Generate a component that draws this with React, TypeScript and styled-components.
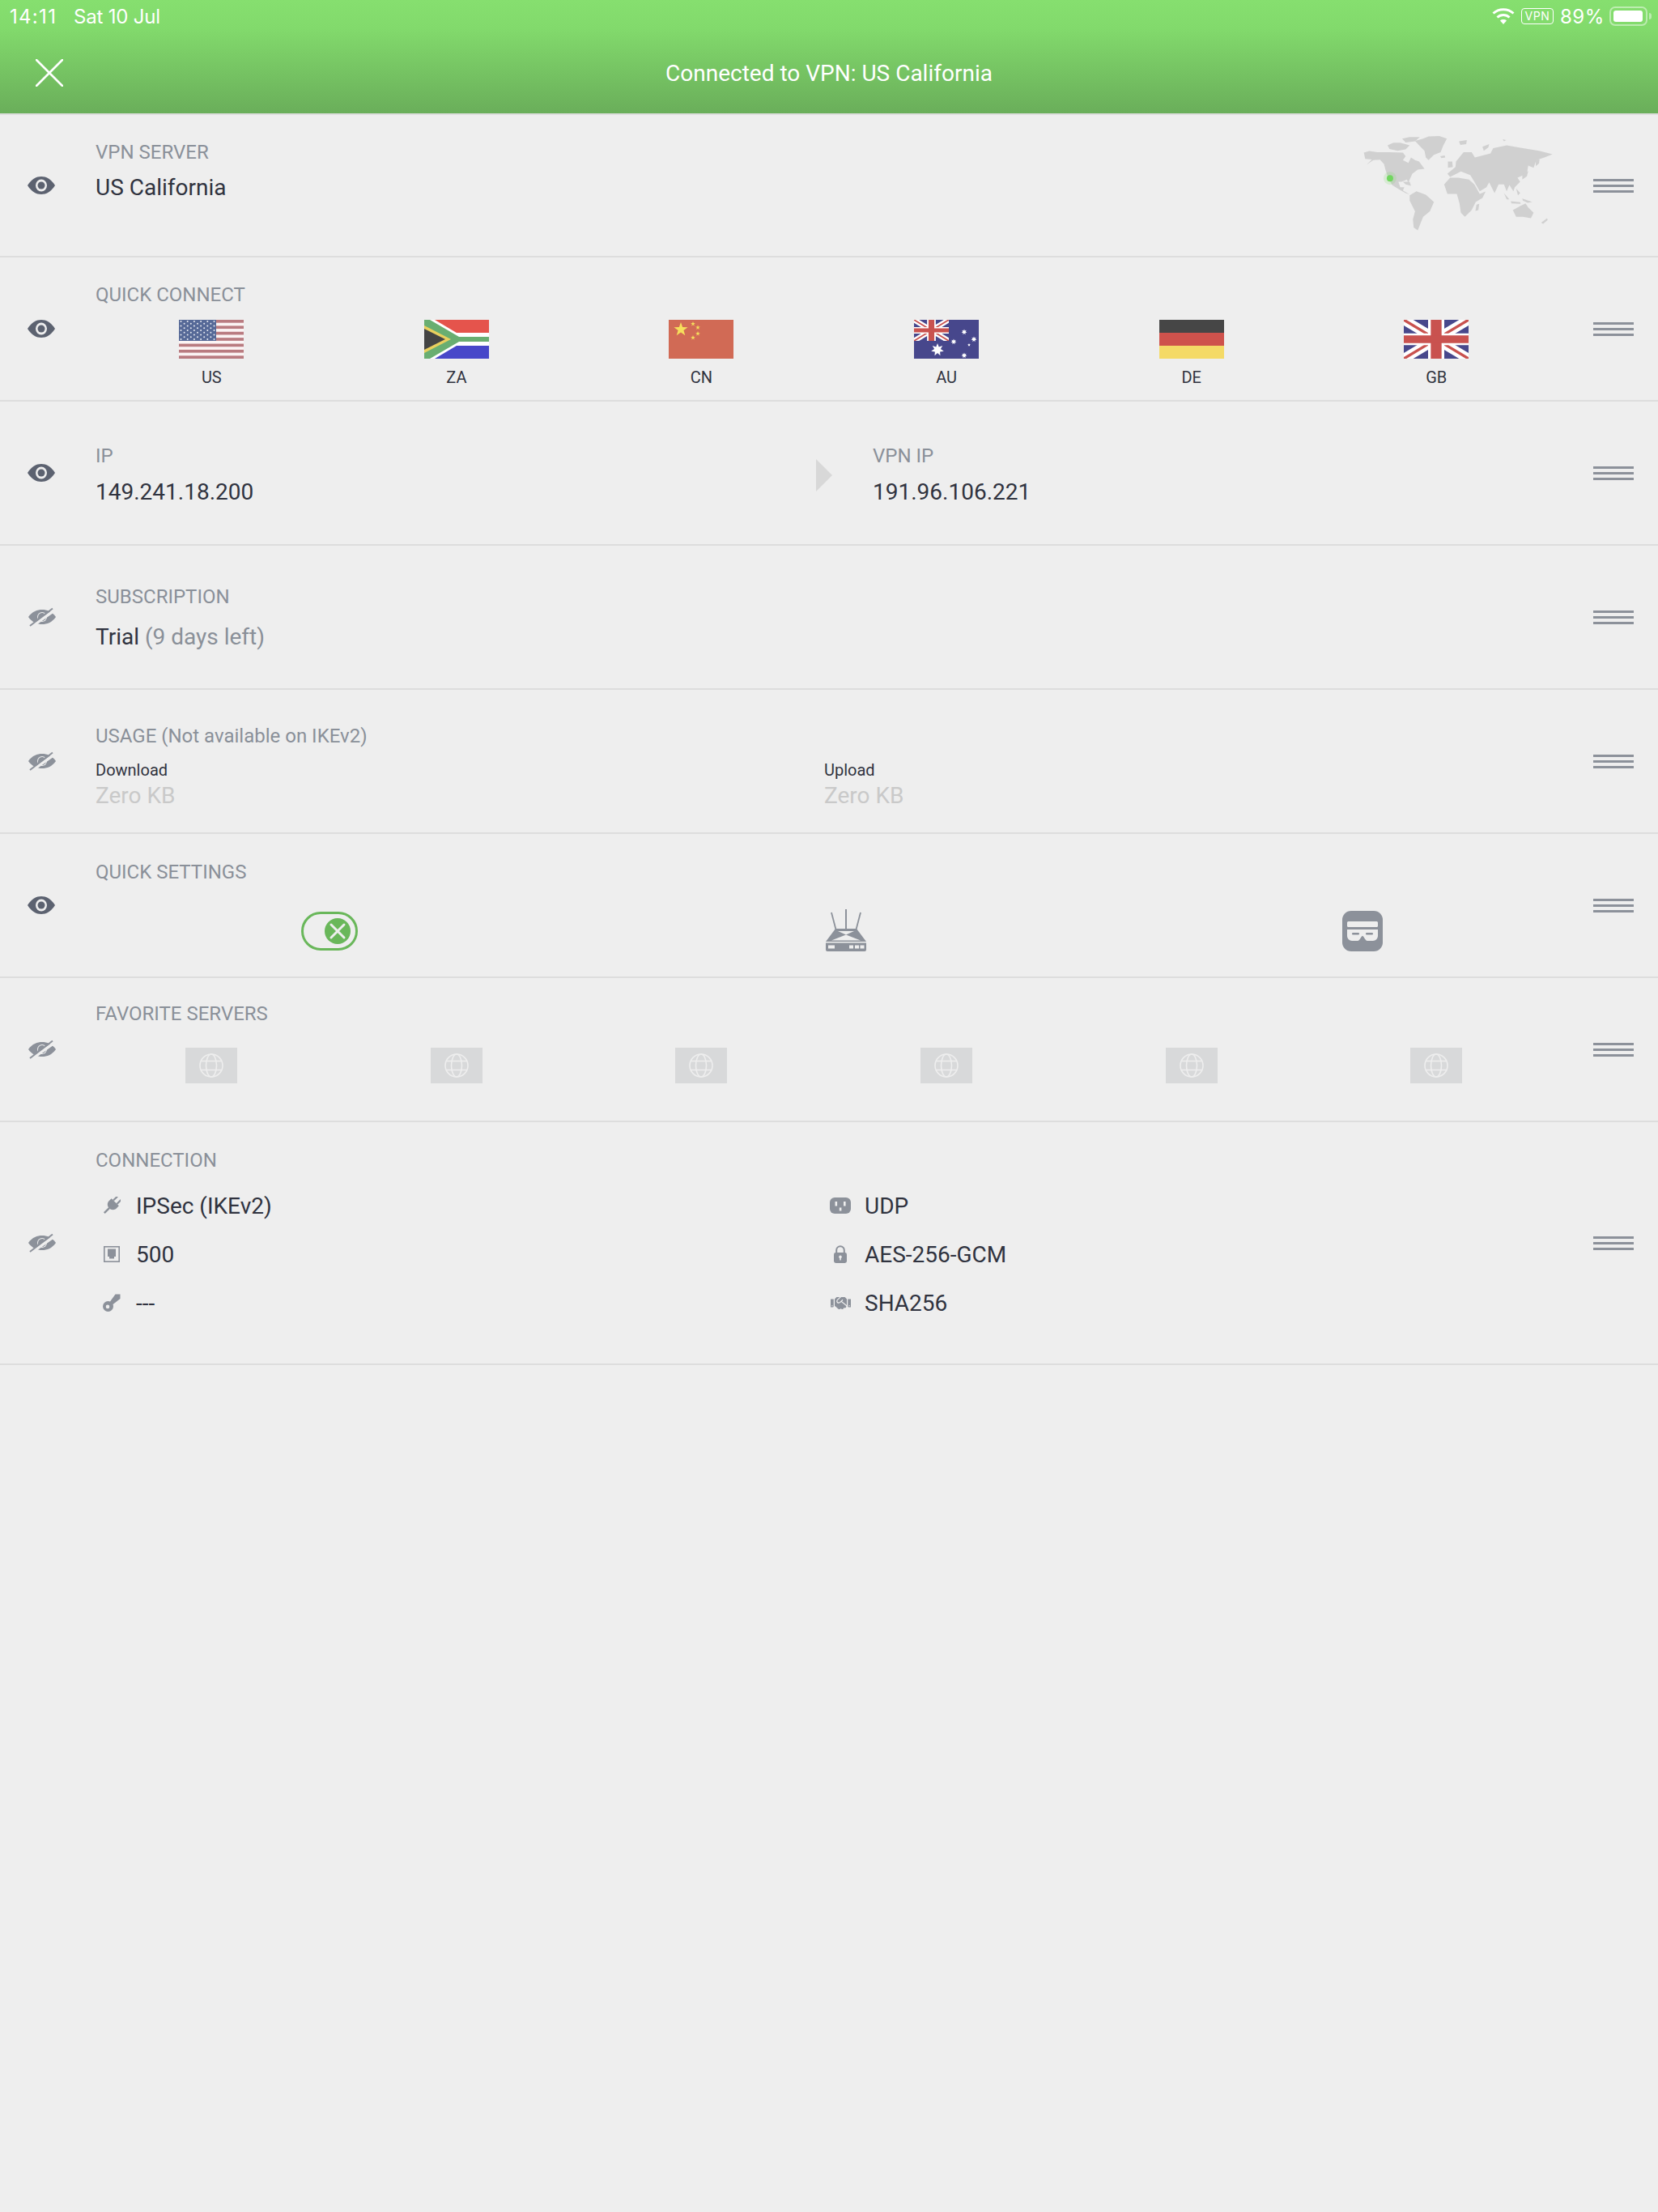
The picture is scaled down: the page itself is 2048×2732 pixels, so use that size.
import React from "react";
import styled, { createGlobalStyle } from "styled-components";
import { FaHandshake } from "react-icons/fa";

const GlobalStyle = createGlobalStyle`
  html, body {
    margin: 0;
    background: #eeeeee;
  }
  body {
    min-height: 2732px;
    font-family: Roboto, "Liberation Sans", sans-serif;
    color: #30333f;
  }
`;

const GRAY = "#8c919a";
const DARK_EYE = "#5c6270";

function EyeIcon({ off }: { off?: boolean }) {
  if (off) {
    return (
      <svg width="36" height="24" viewBox="0 0 36 24">
        <path d="M1 12 C6 5 12 3 18 3 C24 3 30 5 35 12 C30 19 24 21 18 21 C12 21 6 19 1 12 Z" fill={GRAY} />
        <circle cx="18" cy="12" r="6" fill="#eeeeee" />
        <path d="M13 12 a5 5 0 0 1 8 -4 L14 17 a5 5 0 0 1 -1 -5 Z" fill={GRAY} />
        <path d="M23 12 a5 5 0 0 1 -8 4 L22 7 a5 5 0 0 1 1 5 Z" fill={GRAY} />
        <path d="M5 24 L33 4" stroke="#eeeeee" strokeWidth="3.5" />
        <path d="M3 23 L31 1.5" stroke={GRAY} strokeWidth="2" />
      </svg>
    );
  }
  return (
    <svg width="34" height="22" viewBox="0 0 34 22">
      <path d="M0 11 C5 3 11 0 17 0 C23 0 29 3 34 11 C29 19 23 22 17 22 C11 22 5 19 0 11 Z" fill={DARK_EYE} />
      <ellipse cx="17" cy="11" rx="7" ry="7.5" fill="#eeeeee" />
      <circle cx="17" cy="11" r="4.5" fill={DARK_EYE} />
    </svg>
  );
}

function CloseIcon() {
  return (
    <svg width="34" height="34" viewBox="0 0 34 34">
      <path d="M1 1 L33 33 M33 1 L1 33" stroke="#fff" strokeWidth="2.6" strokeLinecap="round" />
    </svg>
  );
}

function WifiIcon() {
  return (
    <svg width="28" height="20" viewBox="0 0 28 20">
      <path d="M14 20 L10 15.5 C12 13.6 16 13.6 18 15.5 Z" fill="#fff" />
      <path d="M6.5 11.5 C10.5 7.5 17.5 7.5 21.5 11.5" fill="none" stroke="#fff" strokeWidth="3" />
      <path d="M1.5 6.5 C8.5 0 19.5 0 26.5 6.5" fill="none" stroke="#fff" strokeWidth="3" />
    </svg>
  );
}

function WorldMap() {
  return (
    <MapSvg viewBox="245 505 715 365">
      <g fill="#d0d0d0">
        <path d="M250 572 L270 566 L300 570 L345 570 L395 572 L405 585 L395 600 L415 610 L425 590 L440 600 L455 605 L475 632 L450 635 L430 650 L420 672 L415 684 L410 672 L390 680 L378 680 L385 700 L400 700 L395 712 L420 727 L405 722 L380 708 L355 692 L340 665 L330 635 L325 615 L310 598 L285 600 L260 617 L280 597 L255 595 Z" />
        <path d="M338 545 L360 535 L385 535 L420 545 L405 560 L375 565 L345 558 Z" />
        <path d="M392 520 L420 514 L458 514 L440 530 L405 534 Z" />
        <path d="M440 528 L470 520 L490 512 L530 510 L558 520 L545 545 L535 570 L510 580 L490 600 L480 590 L475 565 L455 545 Z" />
        <path d="M533 585 L550 582 L552 590 L538 592 Z" />
        <path d="M603 530 L632 525 L630 540 L608 543 Z" />
        <path d="M395 680 L420 680 L425 695 L405 690 Z" />
        <path d="M420 730 L445 715 L480 728 L510 755 L495 790 L470 810 L460 835 L450 860 L435 850 L432 820 L440 790 L420 750 Z" />
        <path d="M548 690 L570 665 L600 665 L640 672 L660 690 L680 725 L702 716 L690 740 L665 755 L650 785 L625 810 L610 795 L605 760 L595 725 L560 725 Z" />
        <path d="M668 765 L678 762 L675 785 L664 788 Z" />
        <path d="M560 650 L590 625 L592 605 L620 570 L650 570 L662 590 L720 575 L730 555 L780 545 L840 555 L900 565 L950 578 L920 590 L890 600 L880 628 L860 620 L855 650 L820 665 L830 680 L810 700 L805 715 L790 692 L780 715 L770 690 L750 690 L735 722 L715 682 L705 700 L680 715 L660 680 L645 655 L610 642 L590 652 L570 662 Z" />
        <path d="M690 550 L715 540 L712 552 L695 565 Z" />
        <path d="M562 605 L578 605 L580 625 L562 628 Z" />
        <path d="M838 652 L860 640 L855 660 L838 672 Z" />
        <path d="M888 600 L902 596 L900 612 L888 622 Z" />
        <path d="M770 722 L790 745 L780 745 Z" />
        <path d="M795 752 L830 756 L832 762 L798 760 Z" />
        <path d="M815 705 L830 722 L822 730 Z" />
        <path d="M838 742 L875 755 L858 758 L840 750 Z" />
        <path d="M803 785 L830 770 L850 760 L860 775 L880 795 L870 815 L840 810 L815 810 Z" />
        <path d="M908 832 L930 815 L932 822 L915 836 Z" />
        <path d="M765 522 L778 525 L770 530 Z" />
      </g>
      <circle cx="347" cy="667" r="24" fill="#72d660" fillOpacity="0.18" />
      <circle cx="347" cy="667" r="12" fill="#72d660" />
    </MapSvg>
  );
}

function UsFlag() {
  const stripes = Array.from({ length: 7 }, (_, i) => i * 2);
  const stars: Array<[number, number]> = [];
  for (let r = 0; r < 9; r++) {
    for (let c = 0; c < 11; c++) {
      if ((r + c) % 2 === 0) stars.push([2.5 + c * 4.1, 2 + r * 2.75]);
    }
  }
  return (
    <svg width="80" height="48" viewBox="0 0 80 48">
      <rect width="80" height="48" fill="#fbf4f4" />
      {stripes.map((i) => (
        <rect key={i} y={(i * 48) / 13} width="80" height={48 / 13} fill="#b97b80" />
      ))}
      <rect width="46" height="26" fill="#566997" />
      {stars.map(([x, y]) => (
        <circle key={`${x}-${y}`} cx={x} cy={y} r="1" fill="#e8ebf2" />
      ))}
    </svg>
  );
}

function ZaFlag() {
  return (
    <svg width="80" height="48" viewBox="0 0 80 48">
      <rect width="80" height="16" fill="#e5544c" />
      <rect y="32" width="80" height="16" fill="#4747c9" />
      <rect y="16" width="80" height="16" fill="#fff" />
      <path d="M0 0 L13 0 L45 19 L80 19 L80 29 L45 29 L13 48 L0 48 Z" fill="#fff" />
      <path d="M0 0 L7 0 L43 21 L80 21 L80 27 L43 27 L7 48 L0 48 Z" fill="#69ae71" />
      <path d="M0 7 L33 24 L0 41 Z" fill="#e9cf5e" />
      <path d="M0 11 L26 24 L0 37 Z" fill="#444444" />
    </svg>
  );
}

function star(cx: number, cy: number, r: number, points = 5, inner = 0.4) {
  const pts: string[] = [];
  for (let i = 0; i < points * 2; i++) {
    const rad = i % 2 === 0 ? r : r * inner;
    const a = (Math.PI * i) / points - Math.PI / 2;
    pts.push(`${(cx + rad * Math.cos(a)).toFixed(2)},${(cy + rad * Math.sin(a)).toFixed(2)}`);
  }
  return pts.join(" ");
}

function CnFlag() {
  return (
    <svg width="80" height="48" viewBox="0 0 80 48">
      <rect width="80" height="48" fill="#d16a55" />
      <g fill="#f6de5c">
        <polygon points={star(15, 12, 9)} />
        <polygon points={star(30, 5, 3)} />
        <polygon points={star(36, 9.5, 3)} />
        <polygon points={star(36, 17, 3)} />
        <polygon points={star(30, 22, 3)} />
      </g>
    </svg>
  );
}

function UnionJack({ w, h, blue }: { w: number; h: number; blue: string }) {
  return (
    <svg x="0" y="0" width={w} height={h} viewBox="0 0 60 36" preserveAspectRatio="none">
      <rect width="60" height="36" fill={blue} />
      <path d="M0 0 L60 36 M60 0 L0 36" stroke="#fff" strokeWidth="9" />
      <path d="M0 0 L60 36 M60 0 L0 36" stroke="#c9524f" strokeWidth="2.5" />
      <path d="M30 0 V36" stroke="#fff" strokeWidth="15" />
      <path d="M0 18 H60" stroke="#fff" strokeWidth="11" />
      <path d="M30 0 V36" stroke="#c9524f" strokeWidth="10" />
      <path d="M0 18 H60" stroke="#c9524f" strokeWidth="7" />
    </svg>
  );
}

function AuFlag() {
  return (
    <svg width="80" height="48" viewBox="0 0 80 48">
      <rect width="80" height="48" fill="#47478c" />
      <UnionJack w={43} h={26} blue="#47478c" />
      <g fill="#fff">
        <polygon points={star(29, 37, 8, 7, 0.5)} />
        <polygon points={star(62, 15, 3.5, 7, 0.5)} />
        <polygon points={star(49, 27, 3.5, 7, 0.5)} />
        <polygon points={star(74, 24, 3.5, 7, 0.5)} />
        <polygon points={star(68, 31, 2, 5, 0.5)} />
        <polygon points={star(62, 44, 3.5, 7, 0.5)} />
      </g>
    </svg>
  );
}

function DeFlag() {
  return (
    <svg width="80" height="48" viewBox="0 0 80 48">
      <rect width="80" height="16" fill="#464646" />
      <rect y="16" width="80" height="16" fill="#ce524c" />
      <rect y="32" width="80" height="16" fill="#f4da66" />
    </svg>
  );
}

function GbFlag() {
  return (
    <svg width="80" height="48" viewBox="0 0 80 48">
      <UnionJack w={80} h={48} blue="#48488c" />
    </svg>
  );
}

function GlobeIcon() {
  return (
    <svg width="30" height="30" viewBox="0 0 30 30" fill="none" stroke="#eeeeee" strokeWidth="1.6">
      <circle cx="15" cy="15" r="14" />
      <ellipse cx="15" cy="15" rx="6.5" ry="14" />
      <path d="M2.5 9.5 H27.5 M2.5 20.5 H27.5" />
    </svg>
  );
}

function ToggleKnob() {
  return (
    <svg width="32" height="32" viewBox="0 0 32 32">
      <circle cx="16" cy="16" r="16" fill="#69b75a" />
      <path d="M8 8 L24 24 M24 8 L8 24" stroke="#eeeeee" strokeWidth="3" strokeLinecap="round" />
    </svg>
  );
}

function RouterIcon() {
  return (
    <svg width="52" height="54" viewBox="0 0 52 54">
      <g stroke={GRAY} fill="none">
        <path d="M26 0 V25" strokeWidth="2" />
        <path d="M8 4 L13.5 25" strokeWidth="1.8" />
        <path d="M44 4 L38.5 25" strokeWidth="1.8" />
      </g>
      <path d="M13 24 H39 L51 40 H1 Z" fill={GRAY} />
      <path d="M16 27 H36 L26 31.5 Z" fill="#eeeeee" />
      <path d="M26 31.5 L44 38.5 H8 Z" fill="#eeeeee" />
      <path d="M1 41.5 H51 V50 a2 2 0 0 1 -2 2 H3 a2 2 0 0 1 -2 -2 Z" fill={GRAY} />
      <rect x="4" y="44.5" width="8" height="4" fill="#eeeeee" />
      <rect x="30" y="44.5" width="5" height="4" fill="#eeeeee" />
      <rect x="37" y="44.5" width="5" height="4" fill="#eeeeee" />
      <rect x="43.5" y="44.5" width="5" height="4" fill="#eeeeee" />
    </svg>
  );
}

function MaskIcon() {
  return (
    <svg width="50" height="50" viewBox="0 0 50 50">
      <rect width="50" height="50" rx="11" fill={GRAY} />
      <rect x="6" y="13" width="38" height="7" rx="1.5" fill="#eeeeee" />
      <path d="M6 23 H44 V31 a6 6 0 0 1 -6 6 H31 C28 37 27 31 25 31 C23 31 22 37 19 37 H12 a6 6 0 0 1 -6 -6 Z" fill="#eeeeee" />
      <rect x="12" y="27" width="9" height="2.4" rx="1.2" fill={GRAY} />
      <rect x="29" y="27" width="9" height="2.4" rx="1.2" fill={GRAY} />
    </svg>
  );
}

function PlugIcon() {
  return (
    <svg width="22" height="22" viewBox="0 0 22 22">
      <g transform="rotate(45 11 11)" fill={GRAY}>
        <rect x="6.8" y="-2" width="2.2" height="7" />
        <rect x="13" y="-2" width="2.2" height="7" />
        <path d="M4.5 5 H17.5 V9 C17.5 13 14.5 15.5 11 15.5 C7.5 15.5 4.5 13 4.5 9 Z" />
        <rect x="9.8" y="15" width="2.4" height="9" />
      </g>
    </svg>
  );
}

function KeyIcon() {
  return (
    <svg width="22" height="22" viewBox="0 0 22 22">
      <path d="M6.5 9 a6.5 6.5 0 1 0 6.5 6.5 c0 -1 -0.2 -1.8 -0.5 -2.5 L21.5 6 V0.5 H15.5 L9 9.5 C8.3 9.2 7.5 9 6.5 9 Z M6 13.6 a2.3 2.3 0 1 1 0 4.6 a2.3 2.3 0 1 1 0 -4.6 Z" fill={GRAY} fillRule="evenodd" />
    </svg>
  );
}

function LockIcon() {
  return (
    <svg width="16" height="22" viewBox="0 0 16 22">
      <path d="M3.2 10 V6 a4.8 4.8 0 0 1 9.6 0 V10" fill="none" stroke={GRAY} strokeWidth="2" />
      <rect y="9" width="16" height="13" rx="2.4" fill={GRAY} />
      <circle cx="8" cy="14.4" r="1.8" fill="#eeeeee" />
      <rect x="7.2" y="14.5" width="1.6" height="4" fill="#eeeeee" />
    </svg>
  );
}

function PortIcon() {
  return (
    <svg width="20" height="20" viewBox="0 0 20 20">
      <rect x="0.8" y="0.8" width="18.4" height="18.4" fill="none" stroke={GRAY} strokeWidth="1.6" />
      <path d="M5 3.5 H15 V13 H13 V15.5 H7 V13 H5 Z" fill={GRAY} />
    </svg>
  );
}

function OutletIcon() {
  return (
    <svg width="26" height="20" viewBox="0 0 26 20">
      <rect width="26" height="20" rx="6" fill={GRAY} />
      <rect x="6.5" y="5" width="2.6" height="5.5" fill="#eeeeee" />
      <rect x="17" y="5" width="2.6" height="5.5" fill="#eeeeee" />
      <rect x="11.8" y="12.5" width="2.6" height="4" fill="#eeeeee" />
    </svg>
  );
}

const quickServers = [
  { code: "US", flag: <UsFlag /> },
  { code: "ZA", flag: <ZaFlag /> },
  { code: "CN", flag: <CnFlag /> },
  { code: "AU", flag: <AuFlag /> },
  { code: "DE", flag: <DeFlag /> },
  { code: "GB", flag: <GbFlag /> },
];

export default function App() {
  return (
    <>
      <GlobalStyle />
      <Header>
        <StatusBar>
          <TimeText>14:11</TimeText>
          <DateText>Sat 10 Jul</DateText>
          <StatusRight>
            <WifiIcon />
            <VpnBadge>VPN</VpnBadge>
            <Battery>89%</Battery>
            <BatteryShell>
              <BatteryFill />
            </BatteryShell>
            <BatteryNub />
          </StatusRight>
        </StatusBar>
        <TitleBar>
          <CloseButton>
            <CloseIcon />
          </CloseButton>
          <Title>Connected to VPN: US California</Title>
        </TitleBar>
      </Header>

      <Row $height={176}>
        <EyeSlot>
          <EyeIcon />
        </EyeSlot>
        <Content $top={2}>
          <ServerLine>
            <div>
              <Label>VPN SERVER</Label>
              <Value $gap={13}>US California</Value>
            </div>
            <WorldMap />
          </ServerLine>
        </Content>
        <Handle />
      </Row>

      <Row>
        <EyeSlot>
          <EyeIcon />
        </EyeSlot>
        <Content $top={8}>
          <Label>QUICK CONNECT</Label>
          <SixGrid $top={17}>
            {quickServers.map((s) => (
              <FlagCell key={s.code}>
                {s.flag}
                <FlagCode>{s.code}</FlagCode>
              </FlagCell>
            ))}
          </SixGrid>
        </Content>
        <Handle />
      </Row>

      <Row>
        <EyeSlot>
          <EyeIcon />
        </EyeSlot>
        <Content $top={3}>
          <IpLine>
            <div>
              <Label>IP</Label>
              <Value $gap={14}>149.241.18.200</Value>
            </div>
            <Arrow />
            <div>
              <Label>VPN IP</Label>
              <Value $gap={14}>191.96.106.221</Value>
            </div>
          </IpLine>
        </Content>
        <Handle />
      </Row>

      <Row>
        <EyeSlot>
          <EyeIcon off />
        </EyeSlot>
        <Content $top={1}>
          <Label>SUBSCRIPTION</Label>
          <Value $gap={19}>
            Trial <Muted>(9 days left)</Muted>
          </Value>
        </Content>
        <Handle />
      </Row>

      <Row>
        <EyeSlot>
          <EyeIcon off />
        </EyeSlot>
        <Content $top={7}>
          <Label>USAGE (Not available on IKEv2)</Label>
          <TwoCols $top={16}>
            <div>
              <SmallCaption>Download</SmallCaption>
              <ZeroValue>Zero KB</ZeroValue>
            </div>
            <div>
              <SmallCaption>Upload</SmallCaption>
              <ZeroValue>Zero KB</ZeroValue>
            </div>
          </TwoCols>
        </Content>
        <Handle />
      </Row>

      <Row>
        <EyeSlot>
          <EyeIcon />
        </EyeSlot>
        <Content $top={2}>
          <Label>QUICK SETTINGS</Label>
          <SettingsGrid>
            <SettingCell>
              <Toggle>
                <ToggleKnob />
              </Toggle>
            </SettingCell>
            <SettingCell>
              <RouterIcon />
            </SettingCell>
            <SettingCell>
              <MaskIcon />
            </SettingCell>
          </SettingsGrid>
        </Content>
        <Handle />
      </Row>

      <Row>
        <EyeSlot>
          <EyeIcon off />
        </EyeSlot>
        <Content $top={-8}>
          <Label>FAVORITE SERVERS</Label>
          <SixGrid $top={28}>
            {[0, 1, 2, 3, 4, 5].map((i) => (
              <FlagCell key={i}>
                <EmptyFlag>
                  <GlobeIcon />
                </EmptyFlag>
              </FlagCell>
            ))}
          </SixGrid>
        </Content>
        <Handle />
      </Row>

      <Row $height={300}>
        <EyeSlot>
          <EyeIcon off />
        </EyeSlot>
        <Content $top={-6}>
          <Label>CONNECTION</Label>
          <ConnectionGrid>
            <ConnItem>
              <ConnIcon>
                <PlugIcon />
              </ConnIcon>
              IPSec (IKEv2)
            </ConnItem>
            <ConnItem>
              <ConnIcon>
                <OutletIcon />
              </ConnIcon>
              UDP
            </ConnItem>
            <ConnItem>
              <ConnIcon>
                <PortIcon />
              </ConnIcon>
              500
            </ConnItem>
            <ConnItem>
              <ConnIcon>
                <LockIcon />
              </ConnIcon>
              AES-256-GCM
            </ConnItem>
            <ConnItem>
              <ConnIcon>
                <KeyIcon />
              </ConnIcon>
              ---
            </ConnItem>
            <ConnItem>
              <ConnIcon>
                <FaHandshake size={25} color={GRAY} />
              </ConnIcon>
              SHA256
            </ConnItem>
          </ConnectionGrid>
        </Content>
        <Handle />
      </Row>
    </>
  );
}

const Header = styled.header`
  height: 140px;
  background: linear-gradient(#86df6f, #82da6c 25%, #6aae5a);
  border-bottom: 2px solid #dedede;
  color: #fff;
`;

const StatusBar = styled.div`
  display: flex;
  align-items: center;
  height: 40px;
  padding: 0 8px 0 12px;
  font-family: Inter, Roboto, sans-serif;
  font-size: 24px;
`;

const TimeText = styled.span`
  width: 79px;
  letter-spacing: 1.3px;
`;

const DateText = styled.span`
  letter-spacing: -0.2px;
`;

const StatusRight = styled.div`
  display: flex;
  align-items: center;
  margin-left: auto;
`;

const VpnBadge = styled.span`
  box-sizing: border-box;
  width: 40px;
  height: 20px;
  margin-left: 8px;
  border: 1.5px solid #fff;
  border-radius: 4px;
  font-size: 14px;
  line-height: 17px;
  text-align: center;
  letter-spacing: 0.5px;
`;

const Battery = styled.span`
  margin-left: 8px;
  letter-spacing: 0.6px;
`;

const BatteryShell = styled.div`
  box-sizing: border-box;
  width: 47px;
  height: 24px;
  margin-left: 6px;
  padding: 3px;
  border: 2px solid rgba(255, 255, 255, 0.45);
  border-radius: 7px;
`;

const BatteryFill = styled.div`
  width: 36px;
  height: 100%;
  background: #fff;
  border-radius: 3px;
`;

const BatteryNub = styled.div`
  width: 3px;
  height: 8px;
  margin-left: 2px;
  background: rgba(255, 255, 255, 0.45);
  border-radius: 0 3px 3px 0;
`;

const TitleBar = styled.div`
  position: relative;
  display: flex;
  align-items: center;
  justify-content: center;
  height: 100px;
`;

const CloseButton = styled.div`
  position: absolute;
  left: 44px;
  top: 33px;
  display: flex;
`;

const Title = styled.h1`
  margin: 0;
  font-size: 28px;
  font-weight: 400;
`;

const Row = styled.section<{ $height?: number }>`
  display: flex;
  align-items: center;
  box-sizing: border-box;
  height: ${({ $height }) => $height ?? 178}px;
  padding: 0 30px 0 34px;
  border-bottom: 2px solid #dddddd;
`;

const EyeSlot = styled.div`
  flex: none;
  display: flex;
  align-items: center;
  width: 84px;
`;

const Content = styled.div<{ $top?: number }>`
  flex: 1;
  min-width: 0;
  position: relative;
  top: ${({ $top }) => $top ?? 0}px;
`;

const Label = styled.div`
  font-size: 24px;
  line-height: 28px;
  color: #8a9099;
`;

const Value = styled.div<{ $gap?: number }>`
  margin-top: ${({ $gap }) => $gap ?? 12}px;
  font-size: 28px;
  line-height: 34px;
  color: #30333f;
`;

const Muted = styled.span`
  color: #8a9099;
`;

const ServerLine = styled.div`
  display: flex;
  align-items: flex-start;
  justify-content: space-between;
  padding-right: 47px;
`;

const MapSvg = styled.svg`
  flex: none;
  width: 238px;
  height: 122px;
  margin-top: -8px;
`;

const SixGrid = styled.div<{ $top: number }>`
  display: grid;
  grid-template-columns: repeat(6, 302.6px);
  margin: ${({ $top }) => $top}px 0 0 -8px;
`;

const FlagCell = styled.div`
  display: flex;
  flex-direction: column;
  align-items: center;
`;

const FlagCode = styled.span`
  margin-top: 11px;
  font-size: 20px;
  line-height: 24px;
  color: #30333f;
`;

const EmptyFlag = styled.div`
  display: flex;
  align-items: center;
  justify-content: center;
  width: 64px;
  height: 44px;
  background: #d8d9da;
`;

const IpLine = styled.div`
  display: grid;
  grid-template-columns: 890px 20px auto;
  align-items: center;

  & > :last-child {
    margin-left: 50px;
  }
`;

const Arrow = styled.div`
  width: 0;
  height: 0;
  border-style: solid;
  border-width: 20px 0 20px 20px;
  border-color: transparent transparent transparent #d8d8d8;
`;

const TwoCols = styled.div<{ $top: number }>`
  display: grid;
  grid-template-columns: 900px 1fr;
  margin-top: ${({ $top }) => $top}px;
`;

const SmallCaption = styled.div`
  font-size: 20px;
  line-height: 24px;
  color: #30333f;
`;

const ZeroValue = styled.div`
  margin-top: 3px;
  font-size: 28px;
  line-height: 34px;
  color: #c9c9c9;
`;

const SettingsGrid = styled.div`
  display: grid;
  grid-template-columns: repeat(3, 638px);
  align-items: center;
  margin: 32px 0 0 -30px;
`;

const SettingCell = styled.div`
  display: flex;
  justify-content: center;
`;

const Toggle = styled.div`
  box-sizing: border-box;
  display: flex;
  align-items: center;
  justify-content: flex-end;
  width: 70px;
  height: 48px;
  padding-right: 6px;
  border: 3.5px solid #69b75a;
  border-radius: 24px;
`;

const ConnectionGrid = styled.div`
  display: grid;
  grid-template-columns: 900px 1fr;
  grid-auto-rows: 60px;
  margin-top: 12px;
`;

const ConnItem = styled.div`
  display: flex;
  align-items: center;
  font-size: 28px;
  color: #30333f;
`;

const ConnIcon = styled.span`
  flex: none;
  display: flex;
  align-items: center;
  justify-content: center;
  width: 40px;
  margin-right: 10px;
`;

const HandleBars = styled.div`
  flex: none;
  display: flex;
  flex-direction: column;
  gap: 4px;
  width: 50px;
`;

const HandleBar = styled.div`
  height: 3px;
  background: #8c919a;
`;

function Handle() {
  return (
    <HandleBars>
      <HandleBar />
      <HandleBar />
      <HandleBar />
    </HandleBars>
  );
}
